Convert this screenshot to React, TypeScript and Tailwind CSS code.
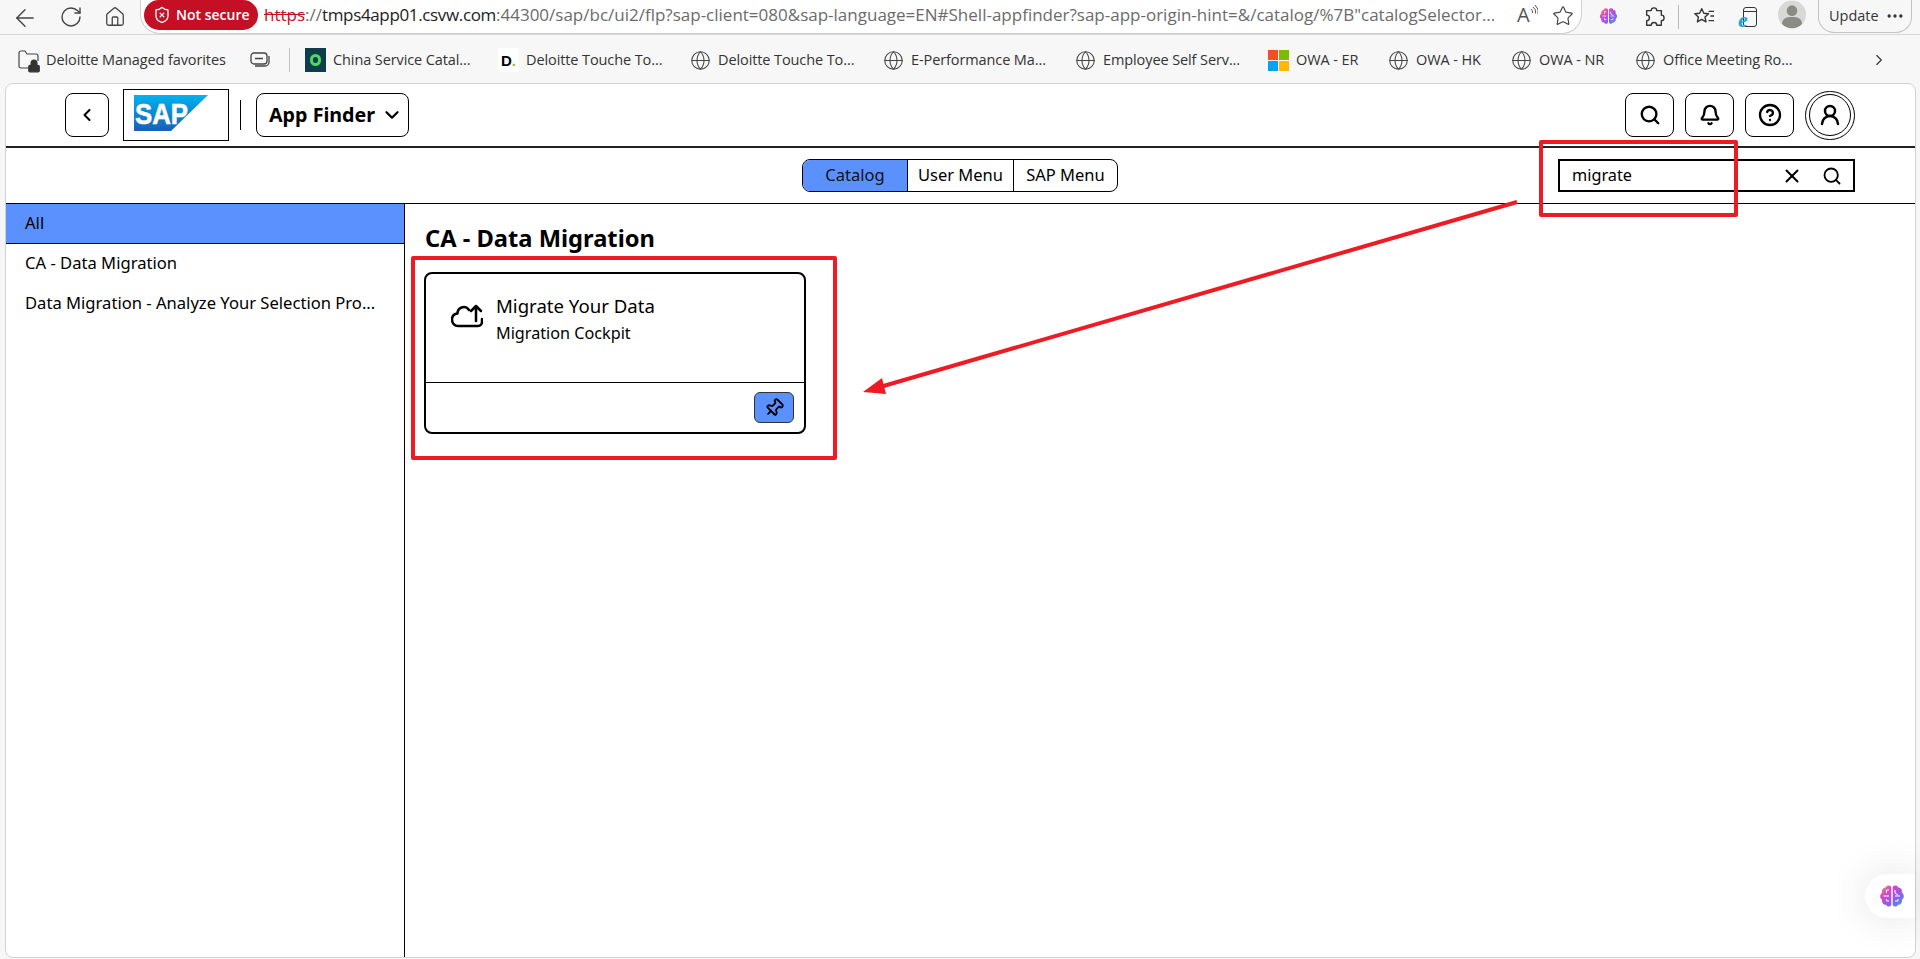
import { ArrowLeft, RotateCw, Home, Star, Globe, ChevronLeft, ChevronRight, ChevronDown, Search, Bell, CircleHelp, UserRound, X, Pin, ShieldX, Ellipsis, Lock } from 'lucide-react';

function BrainIcon({ id, className }: { id: string; className: string }) {
  return (
    <svg viewBox="0 0 26 24" className={className}>
      <defs>
        <linearGradient id={id} x1="0" y1="0" x2="1" y2="1">
          <stop offset="0" stopColor="#f59e42" />
          <stop offset="0.3" stopColor="#d946c8" />
          <stop offset="0.65" stopColor="#8b5cf6" />
          <stop offset="1" stopColor="#38a5f8" />
        </linearGradient>
      </defs>
      <path
        d="M12.3 3C11 .8 7.500 1 6.500 3.500 3.500 3.800 2.500 6.500 3.300 8.500 .5 10.500.5 14 3 15.800 2.500 18.800 4.500 21 7 20.800 8.500 23.500 11.800 23 12.300 20.500ZM13.700 3C15 .8 18.500 1 19.500 3.500 22.500 3.800 23.500 6.500 22.700 8.500 25.500 10.500 25.500 14 23 15.800 23.500 18.800 21.500 21 19 20.800 17.500 23.500 14.200 23 13.700 20.500Z"
        fill={`url(#${id})`}
      />
      <path
        d="M10 6H7.500V9M10 12H4.500M10 17H7.500V15M16 6V9L19 11M16 12H21M16 17H19V15"
        fill="none"
        stroke="#fff"
        strokeWidth="1"
      />
    </svg>
  );
}

function ToolbarIcons() {
  return (
    <>
      <ArrowLeft className="ml-[11px] mt-[4px] h-[28px] w-[28px] shrink-0 text-[#444]" strokeWidth={1.2} />
      <RotateCw className="ml-[20px] mt-[5px] h-[24px] w-[24px] shrink-0 text-[#444]" strokeWidth={1.4} />
      <Home className="ml-[21px] mt-[5px] h-[24px] w-[22px] shrink-0 text-[#444]" strokeWidth={1.4} />
    </>
  );
}

function Bookmark({ label, width, icon }: { label: string; width: string; icon?: React.ReactNode }) {
  return (
    <div className={`flex shrink-0 items-center gap-[7px] ${width}`}>
      {icon ?? <Globe className="h-[21px] w-[21px] shrink-0 text-[#444]" strokeWidth={1.2} />}
      <span className="whitespace-nowrap text-[14.5px] tracking-[-0.1px] text-[#333]">{label}</span>
    </div>
  );
}

function ShellButton({ children }: { children: React.ReactNode }) {
  return (
    <button className="flex h-[44px] w-[49px] items-center justify-center rounded-[8px] border border-black bg-white text-black">
      {children}
    </button>
  );
}

export default function App() {
  return (
    <div className="relative flex h-[959px] w-[1920px] flex-col overflow-hidden bg-[#f7f7f7] font-['Open_Sans',sans-serif]">
      {/* browser toolbar */}
      <div className="flex h-[35px] shrink-0 items-start border-b border-[#d6d6d6]">
        <ToolbarIcons />
        <div className="ml-[14px] flex h-[34px] w-[1442px] shrink-0 items-start rounded-b-[20px] border-x border-b border-[#cfcfcf] bg-white pl-[3px]">
          <div className="flex h-[30px] w-[114px] shrink-0 items-center gap-[5px] rounded-[15px] bg-[#c40f24] pl-[9px] text-white">
            <ShieldX className="h-[18px] w-[18px] shrink-0" strokeWidth={1.8} />
            <span className="whitespace-nowrap text-[14px] font-semibold leading-none">Not secure</span>
          </div>
          <div className="ml-[6px] w-[1231px] shrink-0 whitespace-nowrap pt-[3px] text-[17px] leading-[24px] text-[#6b6b6b]">
            <span className="text-[#c40f24] line-through">https</span>
            <span>://</span>
            <span className="tracking-[-0.35px] text-[#222]">tmps4app01.csvw.com</span>
            <span>:44300/sap/bc/ui2/flp?sap-client=080&amp;sap-language=EN#Shell-appfinder?sap-app-origin-hint=&amp;/catalog/%7B"catalogSelector...</span>
          </div>
          <span className="ml-[22px] mt-[2px] flex shrink-0 items-start text-[20px] leading-[26px] text-[#555]">
            A
            <svg viewBox="0 0 8 12" className="mt-[2px] h-[12px] w-[8px]" fill="none" stroke="#555" strokeWidth="1">
              <path d="M1 5q2 1.500 1.500 4M3 3q3.500 2.500 2.500 6.500M5 1q4.500 4 3 9" />
            </svg>
          </span>
          <Star className="ml-[14px] mt-[5px] h-[22px] w-[22px] shrink-0 text-[#444]" strokeWidth={1.3} />
        </div>
        <BrainIcon id="brain-top" className="ml-[17px] mt-[4px] h-[24px] w-[19px] shrink-0" />
        <svg viewBox="0 0 24 24" className="ml-[25px] mt-[5px] h-[24px] w-[22px] shrink-0" fill="none" stroke="#333" strokeWidth="1.5">
          <path d="M9 5a3 3 0 0 1 6 0h5v5a3 3 0 0 1 0 6v5h-5a3 3 0 0 0-6 0H4v-5a3 3 0 0 0 0-6V5Z" strokeLinejoin="round" />
        </svg>
        <div className="ml-[13px] mt-[5px] h-[24px] w-px shrink-0 bg-[#bbb]" />
        <svg viewBox="0 0 24 22" className="ml-[14px] mt-[5px] h-[22px] w-[22px] shrink-0" fill="none" stroke="#333" strokeWidth="1.500">
          <path d="M9.500 3l2.300 5 5.200.6-3.900 3.500 1.100 5.300-4.700-2.700-4.700 2.700 1.100-5.300L2 8.600 7.200 8Z" strokeLinejoin="round" />
          <path d="M17 6h6M19 11h4M17 16h6" />
        </svg>
        <div className="relative ml-[28px] mt-[7px] h-[20px] w-[14px] shrink-0 rounded-[3px] border-[1.5px] border-[#333]">
          <div className="h-[4px] border-b-[1.5px] border-[#333]" />
          <span className="absolute left-[-6px] top-[1px] font-['Liberation_Serif',serif] text-[22px] font-bold italic leading-[22px] text-[#1aa3e8]">e</span>
        </div>
        <svg viewBox="0 0 29 29" className="ml-[21px] h-[29px] w-[28px] shrink-0">
          <circle cx="14.500" cy="14.500" r="14.500" fill="#d8d8d8" />
          <circle cx="14.500" cy="10.500" r="5.500" fill="#8a8a86" />
          <path d="M4 24c1-6 5-7 10.500-7s9.500 1 10.500 7a14 14 0 0 1-21 0Z" fill="#8a8a86" />
        </svg>
        <div className="ml-[12px] flex h-[33px] w-[94px] shrink-0 items-center rounded-b-[16px] border-x border-b border-[#c4c4c4] bg-[#f7f7f7] pl-[10px]">
          <span className="text-[14.500px] leading-none text-[#333]">Update</span>
          <Ellipsis className="ml-[6px] h-[20px] w-[20px] text-[#333]" strokeWidth={2} />
        </div>
      </div>

      {/* favorites bar */}
      <div className="flex h-[48px] shrink-0 items-center pl-[18px] pt-[2px]">
        <Bookmark
          label="Deloitte Managed favorites"
          width="w-[232px]"
          icon={
            <span className="relative h-[22px] w-[21px] shrink-0">
              <svg viewBox="0 0 21 22" className="h-[22px] w-[21px]" fill="none" stroke="#444" strokeWidth="1.200">
                <path d="M10 19H3a2 2 0 0 1-2-2V4a2 2 0 0 1 2-2h4l2 3h9a2 2 0 0 1 2 2v5" />
              </svg>
              <Lock className="absolute bottom-[-2px] right-[-2px] h-[14px] w-[14px] fill-[#333] text-[#333]" strokeWidth={2} />
            </span>
          }
        />
        <svg viewBox="0 0 20 16" className="h-[16px] w-[20px] shrink-0" fill="none" stroke="#444" strokeWidth="1.300">
          <rect x="1" y="1" width="16" height="11" rx="3" />
          <path d="M5 6.500h8M19 4v6a4 4 0 0 1-4 4H5" />
        </svg>
        <div className="ml-[19px] h-[24px] w-px shrink-0 bg-[#c4c4c4]" />
        <div className="ml-[15px]">
          <Bookmark
            label="China Service Catal..."
            width="w-[193px]"
            icon={
              <span className="flex h-[24px] w-[21px] shrink-0 items-center justify-center bg-[#0f3d4a]">
                <span className="h-[12px] w-[11px] rounded-full border-[3px] border-[#4cd964]" />
              </span>
            }
          />
        </div>
        <Bookmark
          label="Deloitte Touche To..."
          width="w-[192px]"
          icon={
            <span className="flex h-[24px] w-[21px] shrink-0 items-center justify-center bg-white font-['Liberation_Sans',sans-serif] text-[15px] font-bold leading-none text-black">
              D<span className="text-[#86bc25]">.</span>
            </span>
          }
        />
        <Bookmark label="Deloitte Touche To..." width="w-[193px]" />
        <Bookmark label="E-Performance Ma..." width="w-[192px]" />
        <Bookmark label="Employee Self Serv..." width="w-[193px]" />
        <Bookmark
          label="OWA - ER"
          width="w-[120px]"
          icon={
            <span className="grid h-[21px] w-[21px] shrink-0 grid-cols-2 gap-[1px]">
              <span className="bg-[#f25022]" />
              <span className="bg-[#7fba00]" />
              <span className="bg-[#00a4ef]" />
              <span className="bg-[#ffb900]" />
            </span>
          }
        />
        <Bookmark label="OWA - HK" width="w-[123px]" />
        <Bookmark label="OWA - NR" width="w-[124px]" />
        <Bookmark label="Office Meeting Ro..." width="w-[235px]" />
        <ChevronRight className="h-[28px] w-[18px] shrink-0 text-[#333]" strokeWidth={1.5} />
      </div>

      {/* page window */}
      <div className="ml-[5px] mb-[1px] flex w-[1911px] flex-1 flex-col overflow-hidden rounded-[8px] border border-[#d2d2d2] bg-white font-['Noto_Sans',sans-serif] text-black">
        <header className="flex h-[64px] shrink-0 items-center border-b-2 border-[#222] pl-[59px] pr-[60px]">
          <button className="flex h-[44px] w-[44px] items-center justify-center rounded-[8px] border border-black">
            <ChevronLeft className="h-[20px] w-[20px]" strokeWidth={2.5} />
          </button>
          <div className="ml-[14px] flex h-[52px] w-[106px] items-start border border-black pl-[10px] pt-[5px]">
            <svg viewBox="0 0 74 36" className="h-[36px] w-[74px]">
              <defs>
                <linearGradient id="sap-blue" x1="0" y1="0" x2="0" y2="1">
                  <stop offset="0" stopColor="#00b3f0" />
                  <stop offset="1" stopColor="#1a5fb8" />
                </linearGradient>
              </defs>
              <polygon points="0,0 74,0 37,36 0,36" fill="url(#sap-blue)" />
              <text x="1" y="29" fontFamily="Liberation Sans" fontWeight="700" fontSize="30" fill="#fff" stroke="#fff" strokeWidth="0.6" textLength="53" lengthAdjust="spacingAndGlyphs">
                SAP
              </text>
            </svg>
          </div>
          <div className="ml-[11px] h-[30px] w-px bg-black" />
          <button className="ml-[15px] flex h-[44px] w-[153px] items-center rounded-[8px] border border-black pl-[12px]">
            <span className="whitespace-nowrap text-[19.700px] font-bold leading-none">App Finder</span>
            <ChevronDown className="ml-[6px] h-[22px] w-[22px]" strokeWidth={2.5} />
          </button>
          <div className="ml-auto flex items-center gap-[11px]">
            <ShellButton>
              <Search className="h-[22px] w-[22px]" strokeWidth={2.6} />
            </ShellButton>
            <ShellButton>
              <Bell className="h-[22px] w-[22px]" strokeWidth={2.6} />
            </ShellButton>
            <ShellButton>
              <CircleHelp className="h-[24px] w-[24px]" strokeWidth={2.3} />
            </ShellButton>
            <div className="flex h-[49px] w-[50px] items-center justify-center rounded-full border border-black">
              <div className="flex h-[42px] w-[42px] items-center justify-center rounded-full border border-black">
                <UserRound className="h-[24px] w-[24px]" strokeWidth={2.5} />
              </div>
            </div>
          </div>
        </header>

        <div className="grid h-[56px] shrink-0 grid-cols-[796px_auto_1fr] items-center border-b border-black">
          <div />
          <div className="flex h-[33px] overflow-hidden rounded-[8px] border border-black text-[16.500px] leading-none">
            <div className="flex w-[105px] items-center justify-center border-r border-black bg-[#5b91ff] text-[#111]">Catalog</div>
            <div className="flex w-[106px] items-center justify-center border-r border-black">User Menu</div>
            <div className="flex w-[103px] items-center justify-center">SAP Menu</div>
          </div>
          <div className="flex justify-end pr-[60px]">
            <div className="flex h-[33px] w-[297px] items-center border-2 border-black pl-[12px] pr-[11px] text-[16.300px] leading-none">
              <span>migrate</span>
              <X className="ml-auto h-[22px] w-[22px]" strokeWidth={2.2} />
              <Search className="ml-[19px] h-[20px] w-[20px]" strokeWidth={2.2} />
            </div>
          </div>
        </div>

        <div className="flex min-h-0 flex-1">
          <nav className="w-[399px] shrink-0 border-r border-black text-[16.600px]">
            <div className="flex h-[40px] items-center border-b border-black bg-[#5b91ff] pl-[19px]">All</div>
            <div className="flex h-[40px] items-center pb-[2px] pl-[19px]">CA - Data Migration</div>
            <div className="flex h-[40px] items-center whitespace-nowrap pb-[2px] pl-[19px]">Data Migration - Analyze Your Selection Pro...</div>
          </nav>
          <main className="min-w-0 flex-1 pl-[19px] pt-[19px]">
            <h2 className="ml-px text-[23.700px] font-bold leading-[30px]">CA - Data Migration</h2>
            <div className="mt-[19px] flex h-[162px] w-[382px] flex-col rounded-[8px] border-2 border-black">
              <div className="flex h-[109px] shrink-0 border-b border-black pl-[25px] pt-[19px]">
                <svg viewBox="0 0 32 24" className="mt-[11px] h-[24px] w-[32px] shrink-0" fill="none" stroke="#000" strokeWidth="2.500" strokeLinecap="round" strokeLinejoin="round">
                  <path d="M18 6C16 3 13 2.500 10.500 3.500 8 4.500 6.500 7 6.500 9.500 3 10 1 12.500 1 15.500 1 19 3.500 22 7 22H27C29.500 22 31 20 31 17.500V15" />
                  <path d="M25 17V2M20 7l5-5 5 5" />
                </svg>
                <div className="ml-[13px]">
                  <div className="text-[18.600px] leading-[26px]">Migrate Your Data</div>
                  <div className="mt-[2px] text-[16.200px] leading-[24px]">Migration Cockpit</div>
                </div>
              </div>
              <div className="flex flex-1 items-start justify-end pr-[10px] pt-[9px]">
                <button className="flex h-[31px] w-[40px] items-center justify-center rounded-[6px] border border-[#333] bg-[#5b91ff]">
                  <Pin className="h-[20px] w-[20px] rotate-45" strokeWidth={2.2} />
                </button>
              </div>
            </div>
          </main>
        </div>
      </div>

      {/* floating assistant button */}
      <div className="absolute right-[5px] top-[874px] flex h-[44px] w-[50px] items-center rounded-l-full bg-white pl-[14px] shadow-[0_0_40px_rgba(0,0,0,0.12)]">
        <BrainIcon id="brain-float" className="h-[24px] w-[26px]" />
      </div>

      {/* red annotations */}
      <div className="absolute left-[1539px] top-[140px] h-[77px] w-[199px] rounded-[2px] border-[4px] border-[#ed1c24]" />
      <div className="absolute left-[411px] top-[256px] h-[204px] w-[426px] rounded-[2px] border-[4px] border-[#ed1c24]" />
      <svg className="absolute left-0 top-0 h-[959px] w-[1920px]" viewBox="0 0 1920 959" fill="none">
        <line x1="1517" y1="202" x2="880" y2="387" stroke="#ed1c24" strokeWidth="4" />
        <polygon points="863,392 882,378 886,394" fill="#ed1c24" />
      </svg>
    </div>
  );
}
